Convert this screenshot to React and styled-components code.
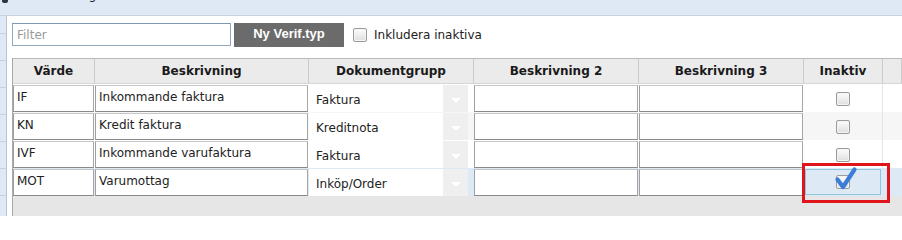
import React from "react";
import styled, { createGlobalStyle } from "styled-components";

const Global = createGlobalStyle`
  html, body { margin: 0; padding: 0; }
  body { font-family: "DejaVu Sans", Verdana, sans-serif; font-size: 12px; color: #222; }
`;

const Root = styled.div`
  width: 902px;
  height: 216px;
  overflow: hidden;
  background: #dfe9f5;
  display: flex;
  flex-direction: column;
`;

const TopBar = styled.div`
  height: 16px;
  flex: none;
  border-bottom: 1px solid #c9d2dc;
  display: flex;
  align-items: flex-start;
  overflow: hidden;
  box-sizing: border-box;
`;

const TitleIcon = styled.span`
  width: 6px;
  height: 3px;
  margin-left: 2px;
  background: #2c3440;
  border-radius: 0 0 2px 2px;
`;

const Title = styled.span`
  margin-left: 26px;
  margin-top: -12px;
  line-height: 14px;
  font-size: 12px;
  color: #222;
`;

const Body = styled.div`
  flex: 1;
  display: flex;
  min-height: 0;
`;

const Sidebar = styled.div`
  width: 6px;
  flex: none;
  border-right: 1px solid #b9c5d3;
  background: repeating-linear-gradient(
    to bottom,
    #dfe9f5 0px,
    #dfe9f5 26px,
    #c6d2e0 26px,
    #c6d2e0 27px
  );
  background-position: 0 -9px;
`;

const Panel = styled.div`
  flex: 1;
  background: #fff;
  padding: 7px 0 0 5px;
  display: flex;
  flex-direction: column;
  gap: 12px;
  min-width: 0;
`;

const Toolbar = styled.div`
  display: flex;
  align-items: center;
  height: 23px;
  flex: none;
`;

const FilterInput = styled.input`
  width: 219px;
  height: 23px;
  box-sizing: border-box;
  border: 1px solid #8fa7c1;
  border-top-color: #7f97b2;
  padding: 0 4px;
  font-family: "DejaVu Sans", Verdana, sans-serif;
  font-size: 12px;
  outline: none;
  &::placeholder { color: #9a9a9a; }
`;

const PrimaryButton = styled.button`
  margin-left: 3px;
  width: 110px;
  height: 24px;
  border: none;
  background: #6b6b6b;
  color: #fff;
  font-family: "Liberation Sans", Arial, sans-serif;
  font-weight: bold;
  font-size: 13px;
  padding: 0;
  padding-bottom: 2px;
`;

const CheckLabel = styled.label`
  margin-left: 9px;
  display: flex;
  align-items: center;
  gap: 7px;
  font-size: 12px;
  color: #222;
`;

const Box = styled.span`
  position: relative;
  display: inline-block;
  width: 14px;
  height: 14px;
  box-sizing: border-box;
  border: 1px solid #9b9b9b;
  border-radius: 2px;
  background: linear-gradient(#fdfdfd, #dedede);
  box-shadow: inset 0 0 0 1px #f4f4f4;
`;

const CheckMark = styled.svg`
  position: absolute;
  left: -1px;
  top: -8px;
  width: 21px;
  height: 23px;
  overflow: visible;
`;

const Grid = styled.div`
  flex: 1;
  background: #e6e6e6;
  border-left: 1px solid #a9a9a9;
  border-top: 1px solid #b9b9b9;
  display: flex;
  flex-direction: column;
`;

const COLS = "82px 214px 165px 165px 165px 79px 1fr";

const HeaderRow = styled.div`
  display: grid;
  grid-template-columns: ${COLS};
  height: 24px;
  background: #ebebeb;
  border-bottom: 1px solid #d6d6d6;
`;

const HeaderCell = styled.div`
  border-right: 1px solid #cbcbcb;
  font-weight: bold;
  font-size: 12px;
  color: #1a1a1a;
  display: flex;
  align-items: center;
  justify-content: center;
  padding-bottom: 1px;
`;

const Row = styled.div`
  display: grid;
  grid-template-columns: ${COLS};
  height: 28px;
  background: ${(p) => (p.$selected ? "#dde9f5" : p.$alt ? "#f6f6f6" : "#fff")};
`;

const Cell = styled.div`
  position: relative;
  display: flex;
  align-items: ${(p) => (p.$center ? "center" : "stretch")};
  justify-content: ${(p) => (p.$center ? "center" : "flex-start")};
  padding: 1px 1px 0 0;
  box-sizing: border-box;
  border-right: ${(p) => (p.$line ? "1px solid #e4e4e4" : "none")};
`;

const TextInput = styled.input`
  width: 100%;
  height: 27px;
  box-sizing: border-box;
  border: 1px solid;
  border-color: #c6c6c6 #a6a6a6 #8a8a8a #a0a0a0;
  background: #fff;
  font-family: "DejaVu Sans", Verdana, sans-serif;
  font-size: 12px;
  color: #222;
  padding: 0 3px 4px 3px;
  outline: none;
`;

const Select = styled.div`
  width: 159px;
  height: 27px;
  background: #fff;
  display: flex;
  align-items: center;
`;

const SelectText = styled.span`
  flex: 1;
  padding-left: 7px;
  padding-top: 2px;
  font-size: 12px;
  color: #222;
`;

const SelectArrow = styled.span`
  width: 25px;
  align-self: stretch;
  background: #efefef;
  display: flex;
  align-items: center;
  justify-content: center;
  padding-top: 4px;
  box-sizing: border-box;
  &::after {
    content: "";
    border-left: 5px solid transparent;
    border-right: 5px solid transparent;
    border-top: 5px solid #fff;
  }
`;

const ActiveCell = styled.div`
  position: relative;
  margin: 0 1px 1px 1px;
  background: #dde9f5;
  border: 1px solid #8fc6df;
  display: flex;
  align-items: center;
  justify-content: center;
  flex: 1;
  align-self: stretch;
`;

const Highlight = styled.div`
  position: absolute;
  left: -4px;
  top: -7px;
  width: 88px;
  height: 40px;
  box-sizing: border-box;
  border: 3px solid #e0141b;
  pointer-events: none;
`;

const rows = [
  { code: "IF", desc: "Inkommande faktura", group: "Faktura" },
  { code: "KN", desc: "Kredit faktura", group: "Kreditnota" },
  { code: "IVF", desc: "Inkommande varufaktura", group: "Faktura" },
  { code: "MOT", desc: "Varumottag", group: "Inköp/Order", checked: true },
];

export default function App() {
  return (
    <>
      <Global />
      <Root>
        <TopBar>
          <TitleIcon />
          <Title>Inställning</Title>
        </TopBar>
        <Body>
          <Sidebar />
          <Panel>
            <Toolbar>
              <FilterInput placeholder="Filter" />
              <PrimaryButton>Ny Verif.typ</PrimaryButton>
              <CheckLabel>
                <Box />
                Inkludera inaktiva
              </CheckLabel>
            </Toolbar>
            <Grid>
              <HeaderRow>
                <HeaderCell>Värde</HeaderCell>
                <HeaderCell>Beskrivning</HeaderCell>
                <HeaderCell>Dokumentgrupp</HeaderCell>
                <HeaderCell>Beskrivning 2</HeaderCell>
                <HeaderCell>Beskrivning 3</HeaderCell>
                <HeaderCell>Inaktiv</HeaderCell>
                <HeaderCell />
              </HeaderRow>
              {rows.map((r, i) => (
                <Row key={r.code} $alt={i % 2 === 1} $selected={r.checked}>
                  <Cell>
                    <TextInput defaultValue={r.code} />
                  </Cell>
                  <Cell>
                    <TextInput defaultValue={r.desc} />
                  </Cell>
                  <Cell>
                    <Select>
                      <SelectText>{r.group}</SelectText>
                      <SelectArrow />
                    </Select>
                  </Cell>
                  <Cell>
                    <TextInput />
                  </Cell>
                  <Cell>
                    <TextInput />
                  </Cell>
                  {r.checked ? (
                    <Cell>
                      <ActiveCell>
                        <Box>
                          <CheckMark viewBox="0 0 21 23">
                            <path
                              d="M1.5 11.5 L7 19 L18.5 1.5"
                              fill="none"
                              stroke="#3b7dd8"
                              strokeWidth="4.2"
                              strokeLinecap="round"
                              strokeLinejoin="round"
                            />
                          </CheckMark>
                        </Box>
                        <Highlight />
                      </ActiveCell>
                    </Cell>
                  ) : (
                    <Cell $center $line>
                      <Box />
                    </Cell>
                  )}
                  <Cell />
                </Row>
              ))}
            </Grid>
          </Panel>
        </Body>
      </Root>
    </>
  );
}
